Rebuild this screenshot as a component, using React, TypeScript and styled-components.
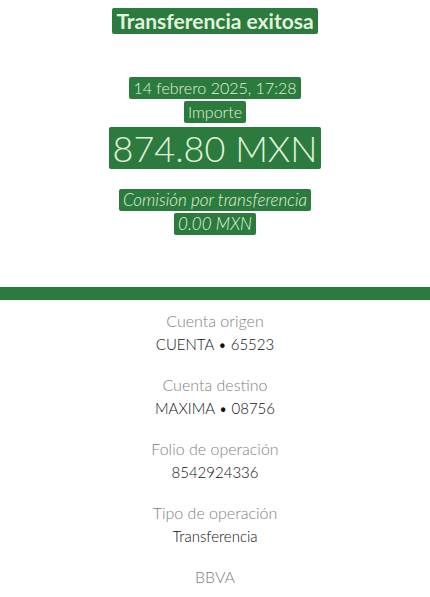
import React from "react";
import styled, { createGlobalStyle } from "styled-components";

const Global = createGlobalStyle`
  html, body { margin: 0; padding: 0; background: #ffffff; }
  body { font-family: Lato, "Open Sans", sans-serif; }
`;

const GREEN = "#2b7a3e";

const Page = styled.div`
  width: 430px;
  height: 597px;
  display: flex;
  flex-direction: column;
  align-items: stretch;
  overflow: hidden;
  background: #fff;
`;

const Header = styled.div`
  display: flex;
  flex-direction: column;
  align-items: center;
  padding-top: 8px;
`;

const Hl = styled.span<{ $size: number; $lh: number; $weight?: number; $italic?: boolean }>`
  display: inline-block;
  background: ${GREEN};
  color: #e3f2dd;
  font-size: ${(p) => p.$size}px;
  line-height: ${(p) => p.$lh}px;
  font-weight: ${(p) => p.$weight ?? 300};
  font-style: ${(p) => (p.$italic ? "italic" : "normal")};
  padding: 0 4px;
  border-radius: 2px;
`;

const Line = styled.div<{ $mt: number }>`
  margin-top: ${(p) => p.$mt}px;
  display: flex;
  justify-content: center;
`;

const Bar = styled.div`
  height: 13px;
  background: ${GREEN};
  margin-top: 52px;
`;

const Details = styled.div`
  display: flex;
  flex-direction: column;
  align-items: center;
  padding-top: 11px;
  gap: 21px;
`;

const Item = styled.div`
  display: flex;
  flex-direction: column;
  align-items: center;
  gap: 3px;
`;

const Label = styled.div`
  font-size: 16px;
  font-weight: 300;
  color: #808080;
  line-height: 20px;
`;

const Value = styled.div`
  font-size: 15px;
  font-weight: 300;
  color: #111;
  line-height: 20px;
`;

const Footer = styled(Label)``;

const items = [
  ["Cuenta origen", "CUENTA • 65523"],
  ["Cuenta destino", "MAXIMA • 08756"],
  ["Folio de operación", "8542924336"],
  ["Tipo de operación", "Transferencia"],
];

export default function App() {
  return (
    <Page>
      <Global />
      <Header>
        <Line $mt={0}>
          <Hl $size={21} $lh={26} $weight={700}>Transferencia exitosa</Hl>
        </Line>
        <Line $mt={43}>
          <Hl $size={16} $lh={22}>14 febrero 2025, 17:28</Hl>
        </Line>
        <Line $mt={2}>
          <Hl $size={16} $lh={22}>Importe</Hl>
        </Line>
        <Line $mt={4}>
          <Hl $size={36} $lh={42}>874.80 MXN</Hl>
        </Line>
        <Line $mt={20}>
          <Hl $size={17} $lh={22} $italic>Comisión por transferencia</Hl>
        </Line>
        <Line $mt={2}>
          <Hl $size={17} $lh={22} $italic>0.00 MXN</Hl>
        </Line>
      </Header>
      <Bar />
      <Details>
        {items.map(([l, v]) => (
          <Item key={l}>
            <Label>{l}</Label>
            <Value>{v}</Value>
          </Item>
        ))}
        <Footer>BBVA</Footer>
      </Details>
    </Page>
  );
}
